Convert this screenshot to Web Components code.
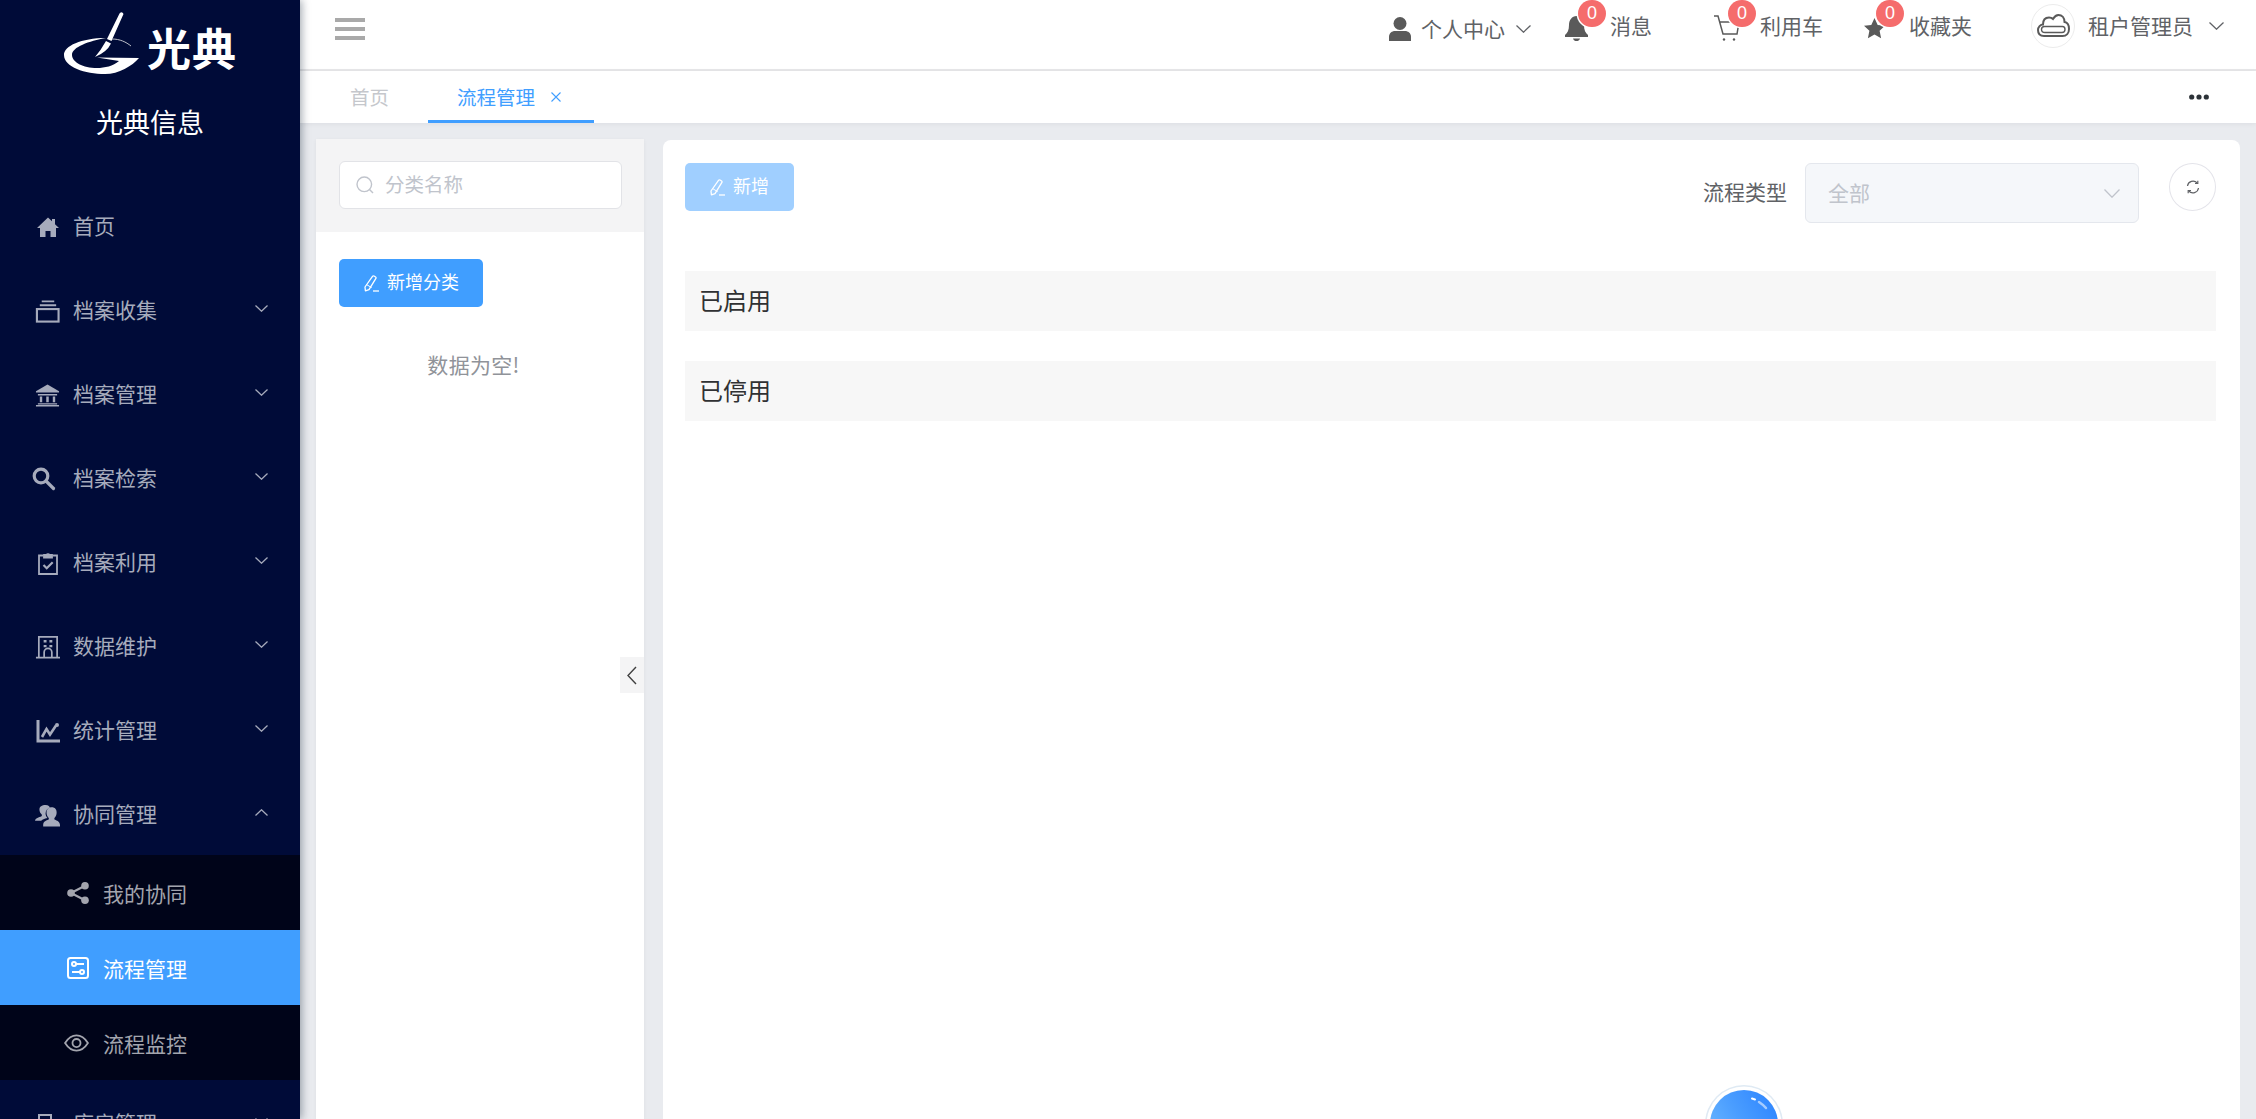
<!DOCTYPE html>
<html lang="zh-CN">
<head>
<meta charset="utf-8">
<title>流程管理</title>
<style>
html,body{margin:0;padding:0;height:100%;overflow:hidden}
body{font-family:"Noto Sans CJK SC","Microsoft YaHei","Liberation Sans",sans-serif;font-size:21px;color:#606266}
</style>
</head>
<body>
<app-shell>
  <side-nav slot="side">
    <nav-item>
      <svg slot="icon" width="24" height="24" viewBox="0 0 24 24" fill="currentColor"><path d="M1 13 12 2.500l4 3.800V4h3v5.200L23 13h-3v9h-5.500v-6h-5v6H4v-9z"/></svg>首页</nav-item>
    <nav-item chevron="down">
      <svg slot="icon" width="26" height="24" viewBox="0 0 26 24" fill="none" stroke="currentColor" stroke-width="2.200" style="margin-left:-1px"><rect x="2" y="10" width="22.500" height="13"/><path d="M5 6h17M7 2h13" stroke-width="2"/></svg>档案收集</nav-item>
    <nav-item chevron="down">
      <svg slot="icon" width="26" height="24" viewBox="0 0 26 24" fill="currentColor" style="margin-left:-1px"><path d="M13 1 25 8v1.500H1V8z"/><path d="M3 11h20v1.500H3zM5 13.500h2.500v6H5zM11.700 13.500h2.600v6h-2.600zM18.500 13.500H21v6h-2.500zM3 20.500h20V22H3zM1 22.500h24V24H1z"/></svg>档案管理</nav-item>
    <nav-item chevron="down">
      <svg slot="icon" width="24" height="24" viewBox="0 0 24 24" fill="none" stroke="currentColor" stroke-width="3.200" style="margin-left:-4px"><circle cx="9" cy="9" r="6.800"/><path d="m14 14 7.500 7.500" stroke-linecap="round"/></svg>档案检索</nav-item>
    <nav-item chevron="down">
      <svg slot="icon" width="24" height="24" viewBox="0 0 24 24" fill="none" stroke="currentColor" stroke-width="1.800"><path d="M7.500 4.500H3v18.500h18V4.500h-4.500"/><path d="M8 6.500V4h2.500a1.700 1.700 0 0 1 3 0H16v2.500z" fill="currentColor"/><path d="m7.500 14 3.200 3.200 6-6" stroke-width="2.200"/></svg>档案利用</nav-item>
    <nav-item chevron="down">
      <svg slot="icon" width="26" height="24" viewBox="0 0 26 24" fill="none" stroke="currentColor" stroke-width="1.800" style="margin-left:-1px"><path d="M4 23V1.500h19V23M1 23h25"/><path d="M9.500 23v-5.500a4 4 0 0 1 8 0V23" /><path d="M9 6h3M15 6h3M9 11h3M15 11h3" stroke-width="2.400"/></svg>数据维护</nav-item>
    <nav-item chevron="down">
      <svg slot="icon" width="24" height="24" viewBox="0 0 24 24" fill="none" stroke="currentColor" stroke-width="2.600"><path d="M2 1v21h22" stroke-width="3"/><path d="m6 18 4.500-8 3.500 5.500 6-9"/><circle cx="21" cy="6" r="2" fill="currentColor" stroke="none"/></svg>统计管理</nav-item>
    <nav-item chevron="up">
      <svg slot="icon" width="26" height="24" viewBox="0 0 26 24" fill="currentColor" style="margin-left:-1px"><path d="M11 1.500c3 0 4.500 2 4.500 3-2.500.5-4.500 3-4.500 6 0 2 .8 3.500 2 4.500-3 .8-6 1.500-6.500 3H0c.3-3 4-3.500 6.800-4.800.6-.4.500-1.500-.2-2.200-1.500-1.500-2-3-2-5 0-2.700 2.500-4.500 6.400-4.500z"/><path d="M17.500 4c3.300 0 5 2.300 5 5.300 0 2.200-.7 4-1.900 5.200-.8.800-.6 2 .2 2.500 1.700 1 5 1.500 5.200 5.500v1.500H8.500V22c.2-3.500 3.300-4.200 5.200-5 .9-.5 1-1.700.2-2.500-1.200-1.200-1.900-3-1.900-5.200 0-3 2-5.300 5.500-5.300z"/></svg>协同管理</nav-item>
    <sub-menu>
      <sub-item>
        <svg slot="icon" width="22" height="22" viewBox="0 0 22 22" fill="currentColor"><circle cx="4" cy="11" r="3.800"/><circle cx="18" cy="3.800" r="3.800"/><circle cx="18" cy="18.200" r="3.800"/><path d="M4 11 18 3.800M4 11l14 7.200" stroke="currentColor" stroke-width="2.200"/></svg>我的协同</sub-item>
      <sub-item active>
        <svg slot="icon" width="22" height="22" viewBox="0 0 22 22" fill="none" stroke="currentColor" stroke-width="2"><rect x="1" y="1" width="20" height="20" rx="2.500"/><circle cx="7" cy="7" r="2"/><path d="M9 7h8M5 15h8"/><circle cx="15" cy="15" r="2"/></svg>流程管理</sub-item>
      <sub-item>
        <svg slot="icon" width="28" height="20" viewBox="0 0 28 20" fill="none" stroke="currentColor" stroke-width="2" style="margin-left:-3px"><path d="M1.200 10C5 4 9 1.500 14 1.500S23 4 26.800 10C23 16 19 18.500 14 18.500S5 16 1.200 10z"/><circle cx="14" cy="10" r="4.500"/></svg>流程监控</sub-item>
    </sub-menu>
    <nav-item chevron="down">
      <svg slot="icon" width="24" height="24" viewBox="0 0 24 24" fill="none" stroke="currentColor" stroke-width="2"><path d="M3 22V3h12v19M15 10h7"/><path d="M7 9h4"/></svg>库房管理</nav-item>
  </side-nav>
  <top-bar slot="top"></top-bar>
  <tab-strip slot="top"></tab-strip>
  <category-panel slot="left"></category-panel>
  <flow-panel slot="right"></flow-panel>
  <assist-orb slot="overlay"></assist-orb>
</app-shell>

<script>
function def(name, html, init){
  customElements.define(name, class extends HTMLElement{
    constructor(){ super(); this.attachShadow({mode:'open'}).innerHTML = html; }
    connectedCallback(){ if(init) init.call(this, this.shadowRoot); }
  });
}
const chev = (w,h,up) => `<svg width="${w}" height="${h}" viewBox="0 0 ${w} ${h}" fill="none" stroke="currentColor" stroke-width="1.300"><path d="${up?`M.5 ${h-.5} ${w/2} .8 ${w-.5} ${h-.5}`:`M.5 .5 ${w/2} ${h-.8} ${w-.5} .5`}"/></svg>`;
const pencil = `<svg width="15" height="17" viewBox="0 0 15 17" fill="none" stroke="currentColor" stroke-width="1.300" stroke-linejoin="round"><path d="M8.500 1.300c.5-.6 1-.6 1.500-.3l1.600 1c.5.300.6.900.3 1.400L5 14.600 1.400 15.800 1 12z"/><path d="M2.600 9.600 7.600 12.600" stroke-width="1"/><path d="M9 16h6"/></svg>`;

def('app-shell', `<style>
:host{display:flex;width:2256px;height:1119px;overflow:hidden;position:relative;background:#e9ebef}
.side{flex:none;width:300px;height:100%;position:relative;z-index:3;box-shadow:2px 0 8px rgba(0,21,41,.35)}
.main{flex:1;min-width:0;display:flex;flex-direction:column;height:100%}
.body{flex:1;min-height:0;display:flex;gap:19px;padding:16px 16px 0 16px}
</style>
<div class="side"><slot name="side"></slot></div>
<div class="main"><slot name="top"></slot><div class="body"><slot name="left"></slot><slot name="right"></slot></div></div>
<slot name="overlay"></slot>`);

def('side-nav', `<style>
:host{display:block;height:100%;overflow:hidden;background:#000b38;color:#a6abbc}
.brand{height:183px;box-sizing:border-box;padding-top:12px;display:flex;flex-direction:column;align-items:center}
.logo{display:flex;align-items:flex-end;height:63px;color:#fff}
.logo b{font-size:44px;line-height:46px;font-weight:700;letter-spacing:1px;margin:0 0 5px 6px;white-space:nowrap}
.title{margin-top:27px;color:#fff;font-size:27px;line-height:40px}
</style>
<div class="brand">
 <div class="logo">
  <svg width="78" height="63" viewBox="62 12 78 63"><path fill="#fff" d="M105 38C80 38 63 46 63 55 63 67 84 74 104 74 118 74 131 66 138 58L96 57.500 118 61C112 66 104 68 96 68 82 68 71 62 71 55 71 47 88 41 105 38Z"/><path fill="#fff" d="M118.500 13.500Q121 11 122.500 14L110.500 41 106 39ZM105 41 110 43.500Q106 52 94 57 100 50 105 41Z"/><path d="M111 39C119 39 125 42 130 46" fill="none" stroke="#bdbfc9" stroke-width="1"/></svg>
  <b>光典</b>
 </div>
 <div class="title">光典信息</div>
</div>
<slot></slot>`);

def('nav-item', `<style>
:host{display:flex;align-items:center;height:84px;box-sizing:border-box;padding:0 32px 0 36px;font-size:21px;color:inherit}
.ic{flex:none;width:24px;margin-right:13px;display:flex;align-items:center;margin-top:3px}
.t{flex:1;white-space:nowrap}
.ch{flex:none;display:flex;margin-top:-2px}
</style>
<span class="ic"><slot name="icon"></slot></span><span class="t"><slot></slot></span><span class="ch"></span>`, function(r){
  const c=this.getAttribute('chevron');
  if(c) r.querySelector('.ch').innerHTML = chev(13,7,c==='up');
});

def('sub-menu', `<style>:host{display:block;background:#000419}</style><slot></slot>`);

def('sub-item', `<style>
:host{display:flex;align-items:center;height:75px;box-sizing:border-box;padding-left:67px;font-size:21px;color:#a3a5ae}
:host([active]){background:#409eff;color:#fff}
.ic{flex:none;width:22px;margin-right:14px;display:flex;align-items:center}
</style><span class="ic"><slot name="icon"></slot></span><span><slot></slot></span>`);

def('top-link', `<style>
:host{display:flex;align-items:center;position:relative;height:30px;color:#606266;font-size:21px;line-height:30px;white-space:nowrap}
.ic{display:flex;align-items:center;color:#5a5a5a;margin-right:var(--gap,21px);margin-top:var(--icm,6px)}
.b{position:absolute;left:var(--bx,14px);top:-10px;width:28px;height:27px;box-sizing:border-box;border-radius:14px;background:#f56c6c;color:#fff;font-size:18px;line-height:27px;text-align:center;box-shadow:0 0 0 1.500px #fff;font-family:"Liberation Sans",sans-serif}
.ch{display:flex;margin-left:var(--chgap,10px);color:#606266;margin-top:2px}
</style><span class="ic"><slot name="icon"></slot></span><span><slot></slot></span><span class="ch"></span>`, function(r){
  if(this.hasAttribute('badge')){ const b=document.createElement('span'); b.className='b'; b.textContent=this.getAttribute('badge'); r.appendChild(b); }
  if(this.hasAttribute('chevron')) r.querySelector('.ch').innerHTML = chev(15,8); else r.querySelector('.ch').remove();
});

def('top-bar', `<style>
:host{display:flex;flex:none;height:69px;box-sizing:content-box;background:#fff;border-bottom:2px solid #e7e7e9;overflow:hidden;padding-left:35px}
.burger{display:flex;flex-direction:column;gap:5px;margin-top:18px;width:30px}
.burger i{display:block;height:4px;background:#a9a9a9}
.right{margin-left:auto;display:flex;align-items:flex-start;padding:10px 32px 0 0}
top-link{flex:none}
.u{margin-top:3px;--gap:10px;--icm:1px;margin-left:0}
.u{--chgap:11px}
.bell{margin-left:33px}.cart{margin-left:62px}.star{margin-left:41px;--gap:24px}
.user{margin-left:59px;--gap:13px;--chgap:16px}
.av{width:44px;height:44px;box-sizing:border-box;border:1.500px solid #ececec;border-radius:50%;display:flex;align-items:center;justify-content:center;margin-top:-5px}
svg{display:block}
</style>
<div class="burger"><i></i><i></i><i></i></div>
<div class="right">
 <top-link class="u" chevron><svg slot="icon" width="22" height="24" viewBox="0 0 22 24" fill="#5a5a5a"><circle cx="11" cy="6.500" r="6.500"/><path d="M0 24v-4c0-4 3-6 6-6h10c3 0 6 2 6 6v4z"/></svg>个人中心</top-link>
 <top-link class="bell" badge="0" style="--bx:14px"><svg slot="icon" width="25" height="26" viewBox="0 0 25 26" fill="#5a5a5a"><path d="M12.500 1C8 1 5 5 5 10c0 5-1.500 8-4 10v2h23v-2c-2.500-2-4-5-4-10 0-5-3-9-7.500-9z"/><path d="M9 23.500h7c-.5 2-2 2.500-3.500 2.500S9.500 25.500 9 23.500z"/></svg>消息</top-link>
 <top-link class="cart" badge="0" style="--bx:14px"><svg slot="icon" width="25" height="26" viewBox="0 0 25 26" fill="none" stroke="#5a5a5a" stroke-width="1.500"><path d="M0 1h4l5 18h14l2-12H6"/><circle cx="10" cy="24.500" r="1.200" fill="#5a5a5a" stroke="none"/><circle cx="20" cy="24.500" r="1.200" fill="#5a5a5a" stroke="none"/></svg>利用车</top-link>
 <top-link class="star" badge="0" style="--bx:12px"><svg slot="icon" width="21" height="21" viewBox="0 0 21 21" fill="#5a5a5a"><path d="m10.500 0 3.200 7 7.300.8-5.400 5 1.500 7.400-6.600-3.800-6.600 3.800 1.500-7.400-5.400-5 7.300-.8z"/></svg>收藏夹</top-link>
 <top-link class="user" chevron style="--icm:6px"><span slot="icon" class="av"><svg width="33" height="23" viewBox="0 0 33 23" fill="none" stroke="#5a5a5a" stroke-width="2"><path d="M7 22C3 22 1 19.500 1 16 1 13 3.500 10.500 6 10.500 6 6 8.500 3.500 12 3.500c1.500 0 3 .5 4 1.500C17.500 2.500 19.500 1 21.500 1c3.500 0 6 3 6 7 3 .5 4.500 3.500 4.500 7 0 4-2.500 7-6.500 7z"/><path d="M8 18.500c-2.500 0-3.500-1.200-3.500-3s1-3 3-3h18c2 0 2.500 1.500 2.500 3s-.8 3-3 3z" stroke-width="1.400"/></svg></span>租户管理员</top-link>
</div>`);

def('tab-strip', `<style>
:host{display:flex;flex:none;align-items:stretch;height:52px;background:#fff;padding:0 47px 0 20px;gap:9px;box-shadow:0 1px 5px rgba(0,21,41,.06);position:relative;z-index:1;font-size:19.500px}
.tab{display:flex;align-items:center;padding:0 30px;color:#c5c7cc;box-sizing:border-box;line-height:28px}
.on{color:#409eff;border-bottom:3px solid #409eff;padding:3px 33px 0 29px}
.x{margin-left:16px;display:flex}
.more{margin-left:auto;display:flex;align-items:center}
</style>
<div class="tab">首页</div>
<div class="tab on">流程管理<span class="x"><svg width="10" height="10" viewBox="0 0 10 10" stroke="#409eff" stroke-width="1.100"><path d="M.5.500l9 9M9.500.500l-9 9"/></svg></span></div>
<div class="more"><svg width="20" height="6" viewBox="0 0 20 6" fill="#2c3238"><circle cx="2.700" cy="3" r="2.600"/><circle cx="10" cy="3" r="2.600"/><circle cx="17.300" cy="3" r="2.600"/></svg></div>`);

def('ui-button', `<style>
:host{display:inline-flex;align-items:center;height:48px;box-sizing:border-box;padding:0 24px 0 25px;gap:8px;border-radius:5px;background:#409eff;color:#fff;font-size:18px;line-height:24px;white-space:nowrap}
:host([disabled]){background:#a0cfff;padding-right:25px}
.i{display:flex}
.t{margin-top:-5px}
</style><span class="i">${pencil}</span><span class="t"><slot></slot></span>`);

def('category-panel', `<style>
:host{display:block;position:relative;flex:none;width:328px;background:#fff;box-shadow:0 1px 4px rgba(0,21,41,.05)}
.head{background:#f4f4f5;padding:22px 22px 23px 23px}
.input{display:flex;align-items:center;height:48px;box-sizing:border-box;background:#fff;border:1.500px solid #e2e3e7;border-radius:6px;padding-left:16px;color:#c0c4cc;font-size:19.500px}
.input svg{margin-right:11px;flex:none}
.input span{margin-top:-3px}
.body{padding:27px 22px 0 23px}
.empty{margin-top:42px;text-align:center;padding-right:14px;color:#909399;font-size:21px;line-height:30px;letter-spacing:.3px}
.handle{position:absolute;right:0;top:518px;width:24px;height:36px;background:#f4f4f5;display:flex;align-items:center;justify-content:center;color:#404040}
</style>
<div class="head"><div class="input"><svg width="18" height="18" viewBox="0 0 18 18" fill="none" stroke="#c0c4cc" stroke-width="1.400"><circle cx="8.300" cy="8.300" r="7.300"/><path d="m13.500 13.500 3.500 3.500"/></svg><span>分类名称</span></div></div>
<div class="body"><ui-button>新增分类</ui-button><div class="empty">数据为空!</div></div>
<div class="handle"><svg width="10" height="19" viewBox="0 0 10 19" fill="none" stroke="currentColor" stroke-width="1.400"><path d="M9 1 1 9.500 9 18"/></svg></div>`);

def('flow-section', `<style>
:host{display:flex;align-items:center;height:60px;box-sizing:border-box;background:#f7f7f7;padding:0 0 4px 14px;color:#303133;font-size:24px}
</style><slot></slot>`);

def('flow-panel', `<style>
:host{display:block;flex:1;min-width:0;margin-top:1px;background:#fff;border-radius:8px 8px 0 0;padding:23px 24px 0 22px;box-sizing:border-box}
.bar{display:flex;align-items:flex-start}
.lab{margin-left:auto;color:#606266;font-size:21px;line-height:56px;margin-right:18px}
.sel{width:334px;height:60px;box-sizing:border-box;display:flex;align-items:center;justify-content:space-between;background:#f5f7fa;border:1.500px solid #e4e7ed;border-radius:6px;padding:0 18px 0 22px;color:#c0c4cc;font-size:21px}
.sel b{font-weight:400;margin-top:-3px}
.sel span{display:flex;color:#c0c4cc}
.ref{width:47px;height:48px;box-sizing:border-box;margin-left:30px;border:1.500px solid #e4e4ea;border-radius:50%;display:flex;align-items:center;justify-content:center;background:#fff}
.list{margin-top:48px;display:flex;flex-direction:column;gap:30px}
</style>
<div class="bar">
 <ui-button disabled>新增</ui-button>
 <span class="lab">流程类型</span>
 <div class="sel"><b>全部</b><span>${chev(16,9)}</span></div>
 <div class="ref"><svg width="14" height="14" viewBox="0 0 14 14" fill="none" stroke="#606266" stroke-width="1.200"><path d="M1.500 6A5.600 5.600 0 0 1 11.200 3M12.500 8A5.600 5.600 0 0 1 2.800 11"/><path d="M11.800 .8v2.700H9M2.200 13.200v-2.700H5"/></svg></div>
</div>
<div class="list"><flow-section>已启用</flow-section><flow-section>已停用</flow-section></div>`);

def('assist-orb', `<style>
:host{display:block;position:absolute;left:1710px;top:1090px;width:68px;height:68px;border-radius:50%;background:linear-gradient(60deg,#72bdff 0%,#4a9dff 50%,#2a82ff 100%);box-shadow:0 0 0 3.500px #fff,0 0 0 5px #dfeaf4}
svg{position:absolute;inset:0}
</style><svg width="68" height="68" viewBox="0 0 68 68" fill="none" stroke-linecap="round"><path d="M42 8.500 45 9.500" stroke="#fff" stroke-width="2"/><path d="M49 12C52 14 54 15.500 56 18" stroke="#fff" stroke-opacity=".55" stroke-width="2.500"/></svg>`);
</script>
</body>
</html>
